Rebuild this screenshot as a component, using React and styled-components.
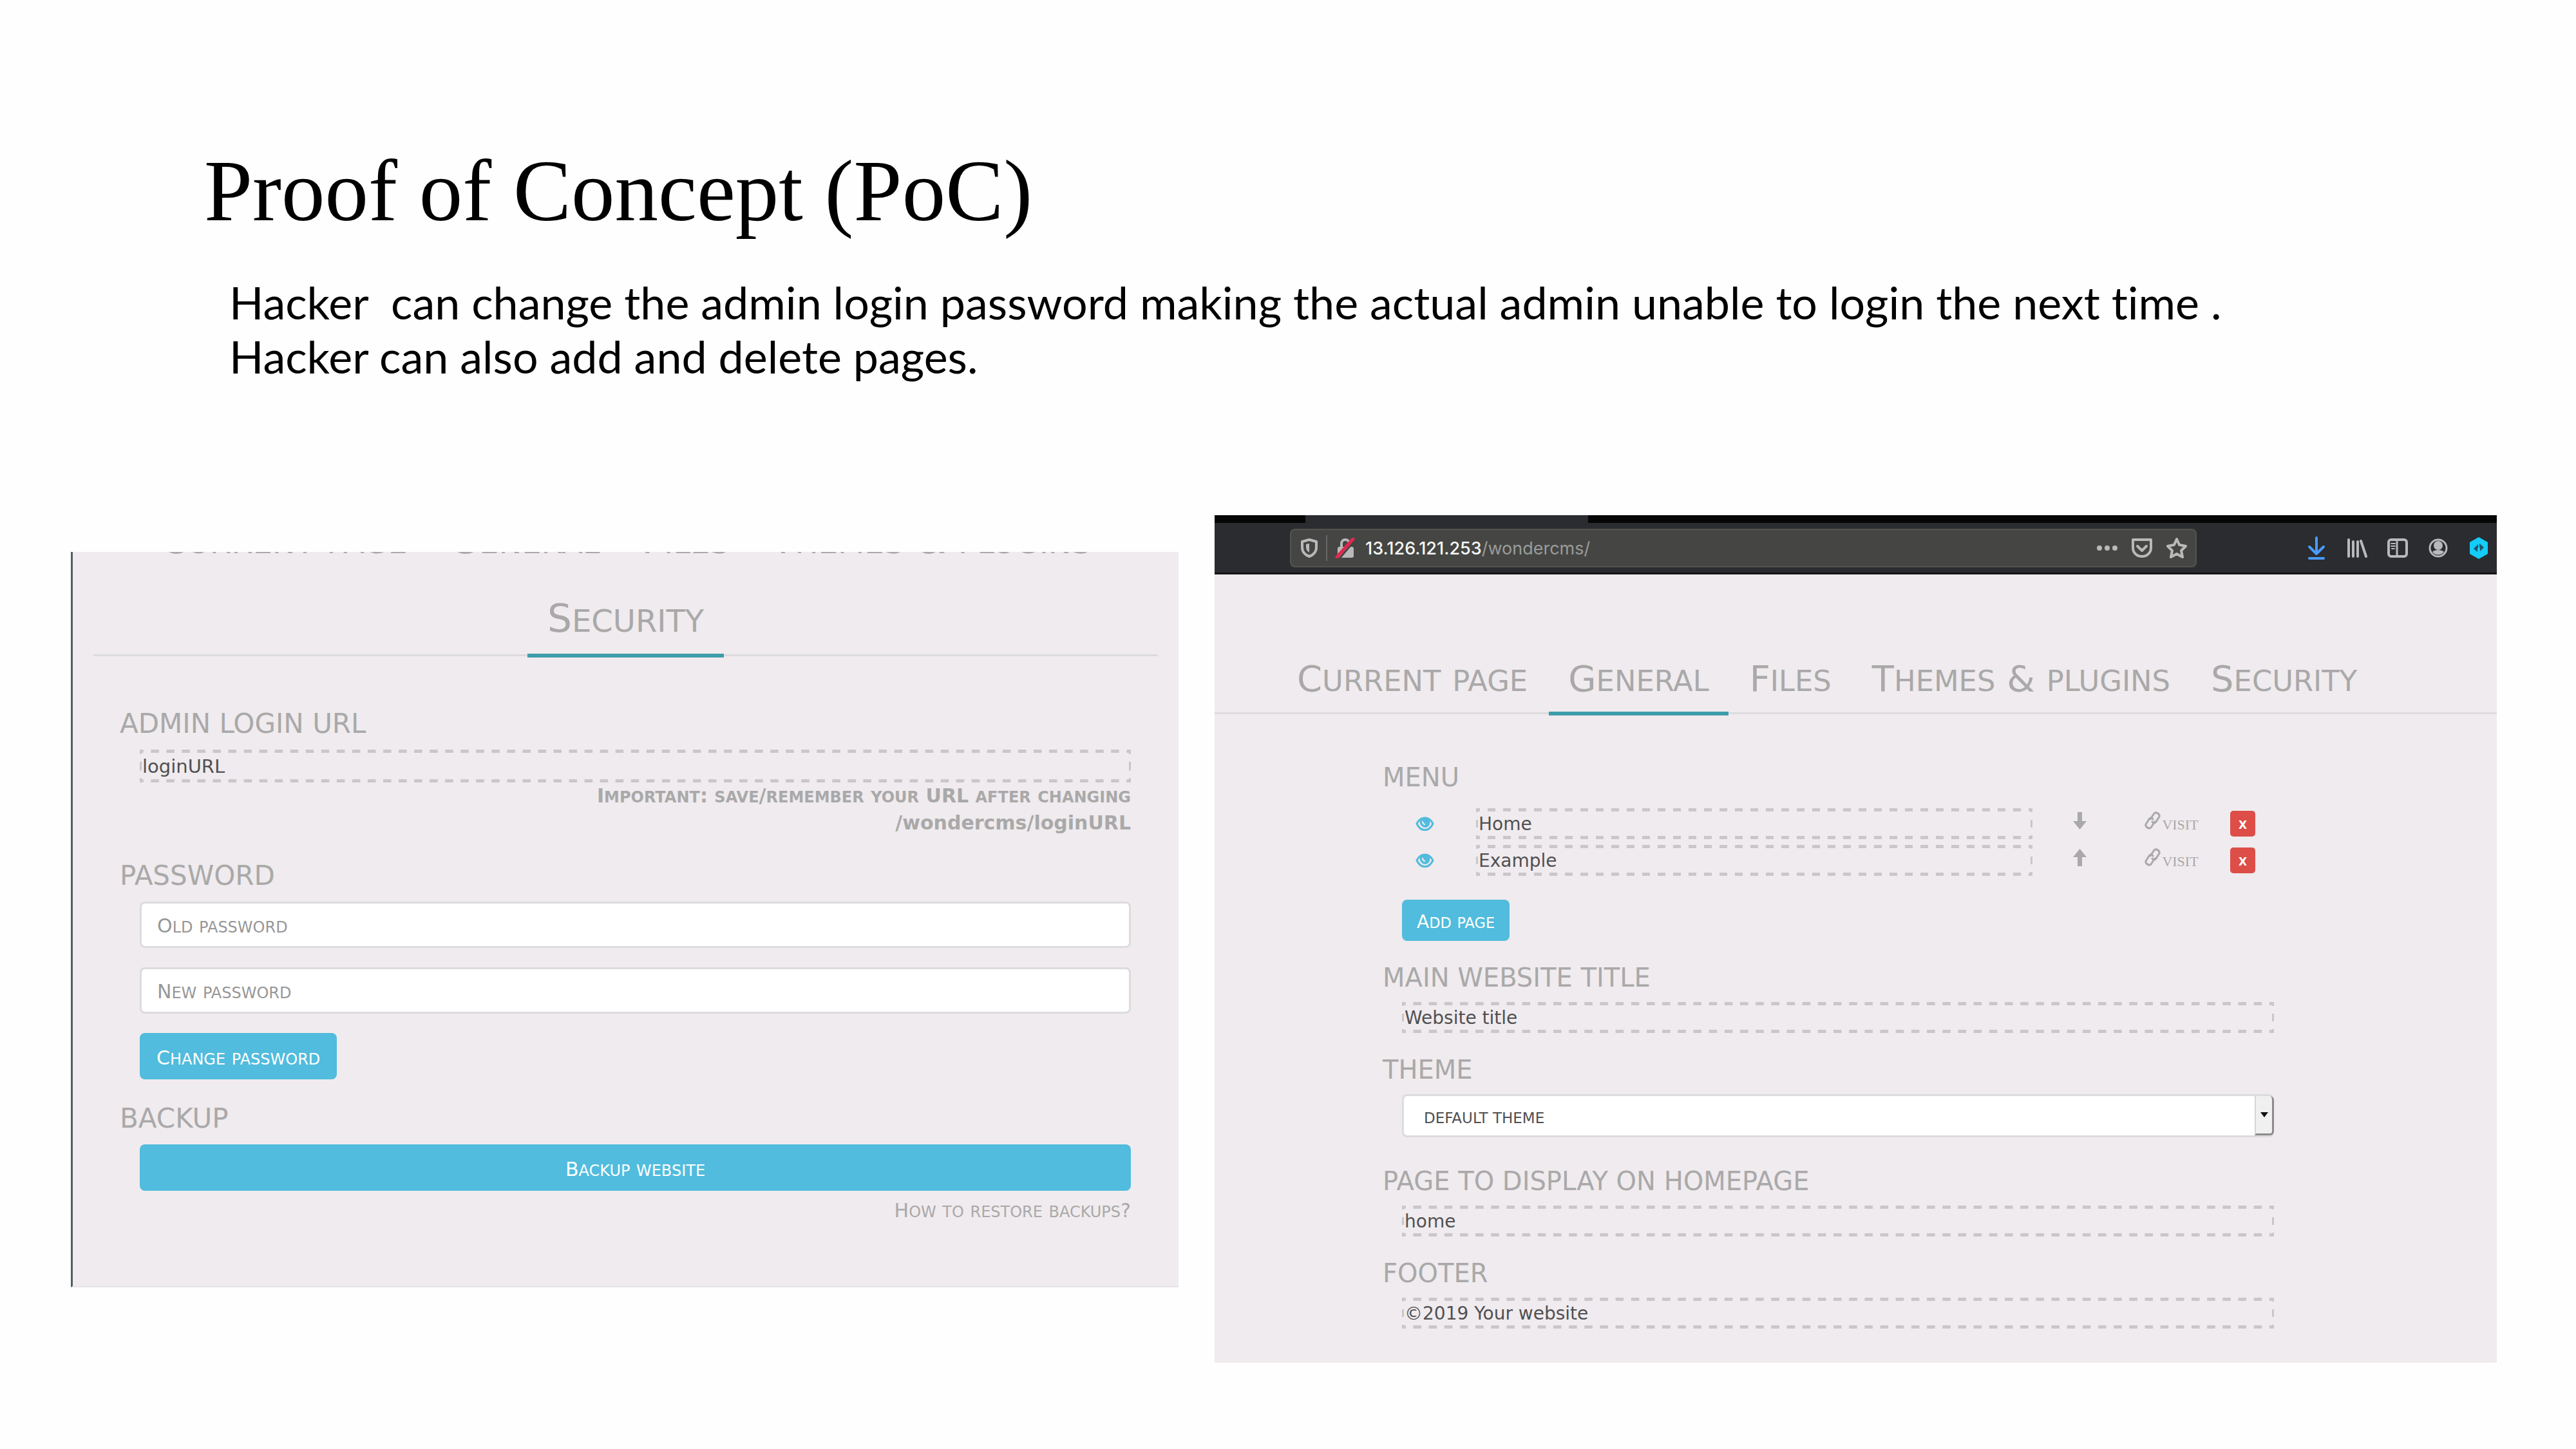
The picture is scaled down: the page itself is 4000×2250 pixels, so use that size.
import React from "react";
import styled, { createGlobalStyle } from "styled-components";

const color = {
  panel: "#f0ebee",
  muted: "#a9a9a9",
  text: "#505052",
  line: "#dcdbde",
  dash: "#c9c7c9",
  blue: "#51bcdd",
  teal: "#3d9daa",
  red: "#dc4e47",
  icon: "#b9b9bb",
};

const sans = `"DejaVu Sans", Verdana, sans-serif`;

const GlobalStyle = createGlobalStyle`
  *, *::before, *::after { box-sizing: border-box; }
  body { margin: 0; background: #fefefe; }
  h1, h2, p, ul { margin: 0; padding: 0; font-weight: 400; }
  ul { list-style: none; }
  button, input, select { font: inherit; margin: 0; border: 0; }
  a { color: inherit; text-decoration: none; }
`;

const Slide = styled.main`
  padding: 222px 123px 132px 110px;
  min-height: 100vh;
`;

const Title = styled.h1`
  padding-left: 207px;
  font: 400 135px/150px "Liberation Serif", "Times New Roman", serif;
  color: #000;
`;

const Lead = styled.p`
  margin-top: 55px;
  padding-left: 246px;
  font: 400 70px/84px Lato, Carlito, sans-serif;
  font-variant-ligatures: none;
  white-space: pre-wrap;
  color: #000;
`;

const Shots = styled.div`
  display: flex;
  align-items: flex-start;
  gap: 56px;
  margin-top: 205px;
  font-family: ${sans};
`;

const Panel = styled.section`
  min-width: 0;
  overflow: hidden;
  background: ${color.panel};
  color: ${color.muted};
`;

const SecurityPanel = styled(Panel)`
  flex: 1717 1 0;
  margin-top: 57px;
  border-left: 3px solid #555b63;
  border-bottom: 2px solid #e6e3e6;
`;

const GeneralPanel = styled(Panel)`
  flex: 1991 1 0;
`;

/* small capitals */

const Low = styled.span`
  font-size: 80%;
  line-height: 1;
  text-transform: uppercase;
`;

function SmallCaps({ children }) {
  return (
    <span>
      {children
        .split(/([a-z]+)/)
        .filter(Boolean)
        .map((run, i) => (/[a-z]/.test(run) ? <Low key={i}>{run}</Low> : run))}
    </span>
  );
}

/* tabs */

const Tabs = styled.nav`
  display: flex;
  column-gap: 3px;
  border-bottom: 3px solid ${color.line};
`;

const Tab = styled.a`
  margin-bottom: -5px;
  padding: 0 31px 20px;
  white-space: nowrap;
  border-bottom: 6px solid ${(p) => (p.$active ? color.teal : "transparent")};
`;

const SecurityTabs = styled(Tabs)`
  flex-wrap: wrap;
  justify-content: center;
  row-gap: 31px;
  margin: -54px 32px 0;
  font-size: 60px;
  line-height: 70px;
`;

const GeneralTabs = styled(Tabs)`
  padding: 129px 0 0 98px;
  font-size: 56px;
  line-height: 66px;

  ${Tab} {
    padding: 0 30px 18px;
  }
`;

/* form parts */

const Form = styled.form`
  display: flex;
  flex-direction: column;
`;

const SecurityForm = styled(Form)`
  gap: 37px;
  padding: 81px 74px 96px 73px;
`;

const GeneralForm = styled(Form)`
  gap: 34px;
  padding: 75px 346px 53px 261px;
`;

const Group = styled.div`
  display: flex;
  flex-direction: column;
  margin-bottom: ${(p) => p.$after || 0}px;
`;

const Heading = styled.label`
  display: block;
  margin-bottom: ${(p) => (p.$large ? 16 : 15)}px;
  font-size: ${(p) => (p.$large ? 42 : 40)}px;
  line-height: ${(p) => (p.$large ? 48 : 46)}px;
  text-transform: uppercase;
`;

const Body = styled.div`
  display: flex;
  flex-direction: column;
  align-items: stretch;
  gap: ${(p) => p.$gap || 0}px;
  padding-left: ${(p) => p.$indent}px;
`;

const dash = (dir) =>
  `linear-gradient(${dir}, ${color.dash} 26%, transparent 26%, transparent 74%, ${color.dash} 74%)`;

const Editable = styled.input`
  width: 100%;
  height: ${(p) => (p.$large ? 51 : 48)}px;
  padding: 0 4px;
  font-family: ${sans};
  font-size: ${(p) => (p.$large ? 29 : 28)}px;
  color: ${color.text};
  background-color: transparent;
  background-image: ${dash("90deg")}, ${dash("90deg")}, ${dash("180deg")}, ${dash("180deg")};
  background-position: top left, bottom left, top left, top right;
  background-size: 24px 5px, 24px 5px, 3px 24px, 3px 24px;
  background-repeat: round no-repeat, round no-repeat, no-repeat round, no-repeat round;
  outline: 0;
`;

const Note = styled.p`
  font-size: 30px;
  line-height: 42px;
  font-weight: 700;
  text-align: right;
`;

const PasswordBox = styled.div`
  display: grid;
  align-items: center;
  height: 72px;
  background: #fff;
  border: 3px solid ${color.line};
  border-radius: 8px;

  > * {
    grid-area: 1 / 1;
  }
`;

const PasswordInput = styled.input`
  width: 100%;
  height: 100%;
  padding: 0 24px;
  background: transparent;
  outline: 0;
  font-size: 30px;
`;

const PasswordLabel = styled.label`
  padding: 2px 24px 0;
  font-size: 30px;
  color: #979797;
  pointer-events: none;
`;

const Button = styled.button`
  align-self: ${(p) => (p.$block ? "stretch" : "flex-start")};
  height: ${(p) => (p.$large ? 72 : 64)}px;
  padding: 4px ${(p) => (p.$large ? 26 : 23)}px 0;
  font-family: ${sans};
  font-size: ${(p) => (p.$large ? 30 : 28)}px;
  color: #fff;
  background: ${color.blue};
  border-radius: 8px;
`;

const HelpLink = styled.a`
  align-self: flex-end;
  margin-top: 10px;
  font-size: 30px;
  line-height: 42px;
`;

/* menu rows */

const MenuList = styled.ul`
  display: flex;
  flex-direction: column;
  gap: 9px;
  margin-bottom: 37px;
  padding-top: 10px;
`;

const MenuRow = styled.li`
  display: grid;
  grid-template-columns: 71px 1fr 147px 138px 83px;
  align-items: center;
  justify-items: center;
  padding-right: 7px;
`;

const NameCell = styled.div`
  display: flex;
  width: 100%;
  padding-left: 44px;
`;

const IconButton = styled.button`
  display: flex;
  padding: 0;
  color: inherit;
  background: none;
`;

const MoveButton = styled(IconButton)`
  padding-bottom: 10px;
`;

const VisitLink = styled.a`
  display: flex;
  align-items: flex-end;
  gap: 2px;
  padding-bottom: 6px;
  font: 400 22px/22px "Liberation Serif", serif;
  text-transform: uppercase;

  svg {
    margin-bottom: 4px;
  }
`;

const DeleteButton = styled.button`
  width: 39px;
  height: 40px;
  padding: 4px 0 0;
  font: 700 17px/20px ${sans};
  text-transform: uppercase;
  color: #fff;
  background: ${color.red};
  border-radius: 5px;
`;

/* theme select */

const SelectBox = styled.div`
  display: flex;
  height: 67px;
  background: #fff;
  border: 3px solid ${color.line};
  border-right: 0;
  border-radius: 8px;
`;

const Select = styled.select`
  flex: 1;
  appearance: none;
  padding: 6px 31px 0;
  font: 400 23px/28px ${sans};
  text-transform: uppercase;
  color: ${color.text};
  background: transparent;
  outline: 0;
`;

const SelectArrow = styled.span`
  display: flex;
  align-items: center;
  justify-content: center;
  width: 30px;
  background: #f0f0f0;
  border: solid #8b8b8b;
  border-width: 0 3px 3px 0;
  border-left: 2px solid #d5d5d5;
  border-radius: 0 6px 6px 0;
`;

/* browser chrome */

const TabStrip = styled.div`
  display: flex;
  height: 12px;
  padding-left: 141px;
  background: #060607;
`;

const OpenTab = styled.div`
  width: 439px;
  background: #2a2c31;
`;

const Toolbar = styled.div`
  display: flex;
  align-items: center;
  height: 80px;
  padding: 0 12px 0 117px;
  background: #2a2c30;
  border-bottom: 3px solid #141516;
`;

const AddressBar = styled.div`
  display: flex;
  flex: 1;
  align-items: center;
  height: 60px;
  padding: 0 13px 0 12px;
  background: #454643;
  border: 2px solid #53544f;
  border-radius: 8px;
  color: ${color.icon};
`;

const Separator = styled.span`
  width: 2px;
  height: 40px;
  margin: 0 12px 0 10px;
  background: #66676a;
`;

const Address = styled.a`
  flex: 1;
  padding: 2px 0 0 15px;
  font: 400 27px/36px Inter, sans-serif;
  color: #9a9b9b;
`;

const Host = styled.span`
  font-weight: 500;
  color: #f6f6f6;
`;

const IconRow = styled.div`
  display: flex;
  align-items: center;
  gap: ${(p) => p.$gap}px;
  margin-left: ${(p) => p.$before || 0}px;
  color: ${color.icon};
`;

const Svg = ({ w = 32, h = 32, children }) => (
  <svg width={w} height={h} viewBox={`0 0 ${w} ${h}`} fill="none" aria-hidden="true">
    {children}
  </svg>
);

const stroke = { stroke: "currentColor", strokeLinecap: "round", strokeLinejoin: "round" };

const ShieldIcon = () => (
  <Svg>
    <path d="M16 3 27 6v9c0 7-5 12-11 14C10 27 5 22 5 15V6z" {...stroke} strokeWidth="4" />
    <path d="M16 9v14c-3-2-5-5-5-8v-5z" fill="currentColor" />
  </Svg>
);

const LockIcon = () => (
  <Svg>
    <path d="M10 14V9a6 6 0 0 1 12 0v5" {...stroke} strokeWidth="4" />
    <rect x="4" y="14" width="25" height="17" rx="3" fill="currentColor" />
    <path d="M7 32 31 4" stroke="#454643" strokeWidth="3" />
    <path d="M3 30 28 2" stroke="#e22850" strokeWidth="5" strokeLinecap="round" />
  </Svg>
);

const DotsIcon = () => (
  <Svg>
    <circle cx="4" cy="16" r="4" fill="currentColor" />
    <circle cx="16" cy="16" r="4" fill="currentColor" />
    <circle cx="28" cy="16" r="4" fill="currentColor" />
  </Svg>
);

const PocketIcon = () => (
  <Svg>
    <path d="M2 3h28v13a14 13 0 0 1-28 0z" {...stroke} strokeWidth="4" />
    <path d="m9 13 7 7 7-7" {...stroke} strokeWidth="4" />
  </Svg>
);

const StarIcon = () => (
  <Svg>
    <path
      d="m16 2 4 9 10 2-7 7 2 10-9-5-9 5 2-10-7-7 10-2z"
      {...stroke}
      strokeWidth="4"
    />
  </Svg>
);

const DownloadIcon = () => (
  <Svg h={36}>
    <g stroke="#4a9bff" strokeWidth="4" strokeLinecap="round" strokeLinejoin="round">
      <path d="M16 2v23M5 16l11 11 11-11" />
      <path d="M5 34h22" />
    </g>
  </Svg>
);

const LibraryIcon = () => (
  <Svg>
    <path d="M3 3v26M10 6v23M17 6v23M22 5l8 24" {...stroke} strokeWidth="4" />
  </Svg>
);

const SidebarIcon = () => (
  <Svg>
    <rect x="2" y="3" width="28" height="26" rx="4" {...stroke} strokeWidth="4" />
    <path d="M15 4v25" {...stroke} strokeWidth="3" />
    <path d="M6 9h6M6 13h6M7 17h4" {...stroke} strokeWidth="2" />
  </Svg>
);

const AccountIcon = () => (
  <Svg>
    <circle cx="16" cy="16" r="13" {...stroke} strokeWidth="3" />
    <circle cx="16" cy="12" r="7" fill="currentColor" />
    <path d="M7 22c3-4 15-4 18 0-4 6-14 6-18 0z" fill="currentColor" />
  </Svg>
);

const HexIcon = () => (
  <Svg h={36}>
    <path d="M16 1 30 9v18L16 35 2 27V9z" fill="#14ccf7" />
    <path d="M15 12v6h-1v6l-6-5zM17 11l7 6-6 6v-6h-1z" fill="#22506a" />
  </Svg>
);

const EyeIcon = () => (
  <Svg w={29} h={24}>
    <path d="M2 12C8 0 21 0 27 12 21 25 8 25 2 12z" stroke={color.blue} strokeWidth="3" />
    <path d="M7 6c4-4 11-4 15 0 2 8-3 12-7 12S5 14 7 6z" fill={color.blue} />
    <path d="M11 8c0 4 2 5 4 5" stroke={color.panel} strokeWidth="2" />
  </Svg>
);

const ArrowIcon = ({ up }) => (
  <Svg w={21} h={27}>
    <path
      d={up ? "M10.500 0 21 13h-7v14H7V13H0z" : "M10.500 27 21 14h-7V0H7v14H0z"}
      fill="currentColor"
    />
  </Svg>
);

const ChainIcon = () => (
  <Svg w={25} h={28}>
    <g {...stroke} strokeWidth="3">
      <path d="M9 12l6-9c3-3 9 1 8 5l-5 8c-2 3-5 2-6 0" />
      <path d="M16 16l-6 9c-3 3-9-1-8-5l5-8c2-3 5-2 6 0" />
    </g>
  </Svg>
);

const TriangleIcon = () => (
  <Svg w={12} h={8}>
    <path d="M0 0h12L6 8z" fill="#111" />
  </Svg>
);

const tabNames = ["Current page", "General", "Files", "Themes & plugins", "Security"];

const renderTabs = (active) =>
  tabNames.map((name) => (
    <Tab key={name} href="#" $active={name === active}>
      <SmallCaps>{name}</SmallCaps>
    </Tab>
  ));

function PasswordField({ id, label }) {
  return (
    <PasswordBox>
      <PasswordInput id={id} type="password" />
      <PasswordLabel htmlFor={id}>
        <SmallCaps>{label}</SmallCaps>
      </PasswordLabel>
    </PasswordBox>
  );
}

function MenuItem({ name, up }) {
  return (
    <MenuRow>
      <IconButton type="button" aria-label="Toggle visibility">
        <EyeIcon />
      </IconButton>
      <NameCell>
        <Editable aria-label="Page name" defaultValue={name} />
      </NameCell>
      <MoveButton type="button" aria-label={up ? "Move up" : "Move down"}>
        <ArrowIcon up={up} />
      </MoveButton>
      <VisitLink href="#">
        <ChainIcon />
        visit
      </VisitLink>
      <DeleteButton type="button">x</DeleteButton>
    </MenuRow>
  );
}

function TextGroup({ id, label, value }) {
  return (
    <Group>
      <Heading htmlFor={id}>{label}</Heading>
      <Body $indent={30}>
        <Editable id={id} defaultValue={value} />
      </Body>
    </Group>
  );
}

function SecuritySettings() {
  return (
    <SecurityPanel>
      <SecurityTabs>{renderTabs("Security")}</SecurityTabs>
      <SecurityForm>
        <Group>
          <Heading $large htmlFor="login-url">Admin login URL</Heading>
          <Body $indent={31}>
            <Editable $large id="login-url" defaultValue="loginURL" />
            <Note>
              <SmallCaps>Important: save/remember your URL after changing</SmallCaps>
              <br />
              /wondercms/loginURL
            </Note>
          </Body>
        </Group>
        <Group>
          <Heading $large as="h2">Password</Heading>
          <Body $indent={31} $gap={30}>
            <PasswordField id="old-password" label="Old password" />
            <PasswordField id="new-password" label="New password" />
            <Button $large type="button">
              <SmallCaps>Change password</SmallCaps>
            </Button>
          </Body>
        </Group>
        <Group>
          <Heading $large as="h2">Backup</Heading>
          <Body $indent={31}>
            <Button $large $block type="button">
              <SmallCaps>Backup website</SmallCaps>
            </Button>
            <HelpLink href="#">
              <SmallCaps>How to restore backups?</SmallCaps>
            </HelpLink>
          </Body>
        </Group>
      </SecurityForm>
    </SecurityPanel>
  );
}

function BrowserBar() {
  return (
    <>
      <TabStrip>
        <OpenTab />
      </TabStrip>
      <Toolbar>
        <AddressBar>
          <ShieldIcon />
          <Separator />
          <LockIcon />
          <Address href="#">
            <Host>13.126.121.253</Host>/wondercms/
          </Address>
          <IconRow $gap={22}>
            <DotsIcon />
            <PocketIcon />
            <StarIcon />
          </IconRow>
        </AddressBar>
        <IconRow $gap={31} $before={170}>
          <DownloadIcon />
          <LibraryIcon />
          <SidebarIcon />
          <AccountIcon />
          <HexIcon />
        </IconRow>
      </Toolbar>
    </>
  );
}

function GeneralSettings() {
  return (
    <GeneralPanel>
      <BrowserBar />
      <GeneralTabs>{renderTabs("General")}</GeneralTabs>
      <GeneralForm>
        <Group>
          <Heading as="h2">Menu</Heading>
          <Body $indent={30}>
            <MenuList>
              <MenuItem name="Home" />
              <MenuItem name="Example" up />
            </MenuList>
            <Button type="button">
              <SmallCaps>Add page</SmallCaps>
            </Button>
          </Body>
        </Group>
        <TextGroup id="site-title" label="Main website title" value="Website title" />
        <Group $after={11}>
          <Heading htmlFor="theme">Theme</Heading>
          <Body $indent={30}>
            <SelectBox>
              <Select id="theme">
                <option>Default theme</option>
              </Select>
              <SelectArrow>
                <TriangleIcon />
              </SelectArrow>
            </SelectBox>
          </Body>
        </Group>
        <TextGroup id="home-page" label="Page to display on homepage" value="home" />
        <TextGroup id="footer" label="Footer" value="©2019 Your website" />
      </GeneralForm>
    </GeneralPanel>
  );
}

export default function App() {
  return (
    <>
      <GlobalStyle />
      <Slide>
        <Title>Proof of Concept (PoC)</Title>
        <Lead>
          {"Hacker  can change the admin login password making the actual admin unable to login the next time ."}
          <br />
          Hacker can also add and delete pages.
        </Lead>
        <Shots>
          <SecuritySettings />
          <GeneralSettings />
        </Shots>
      </Slide>
    </>
  );
}
